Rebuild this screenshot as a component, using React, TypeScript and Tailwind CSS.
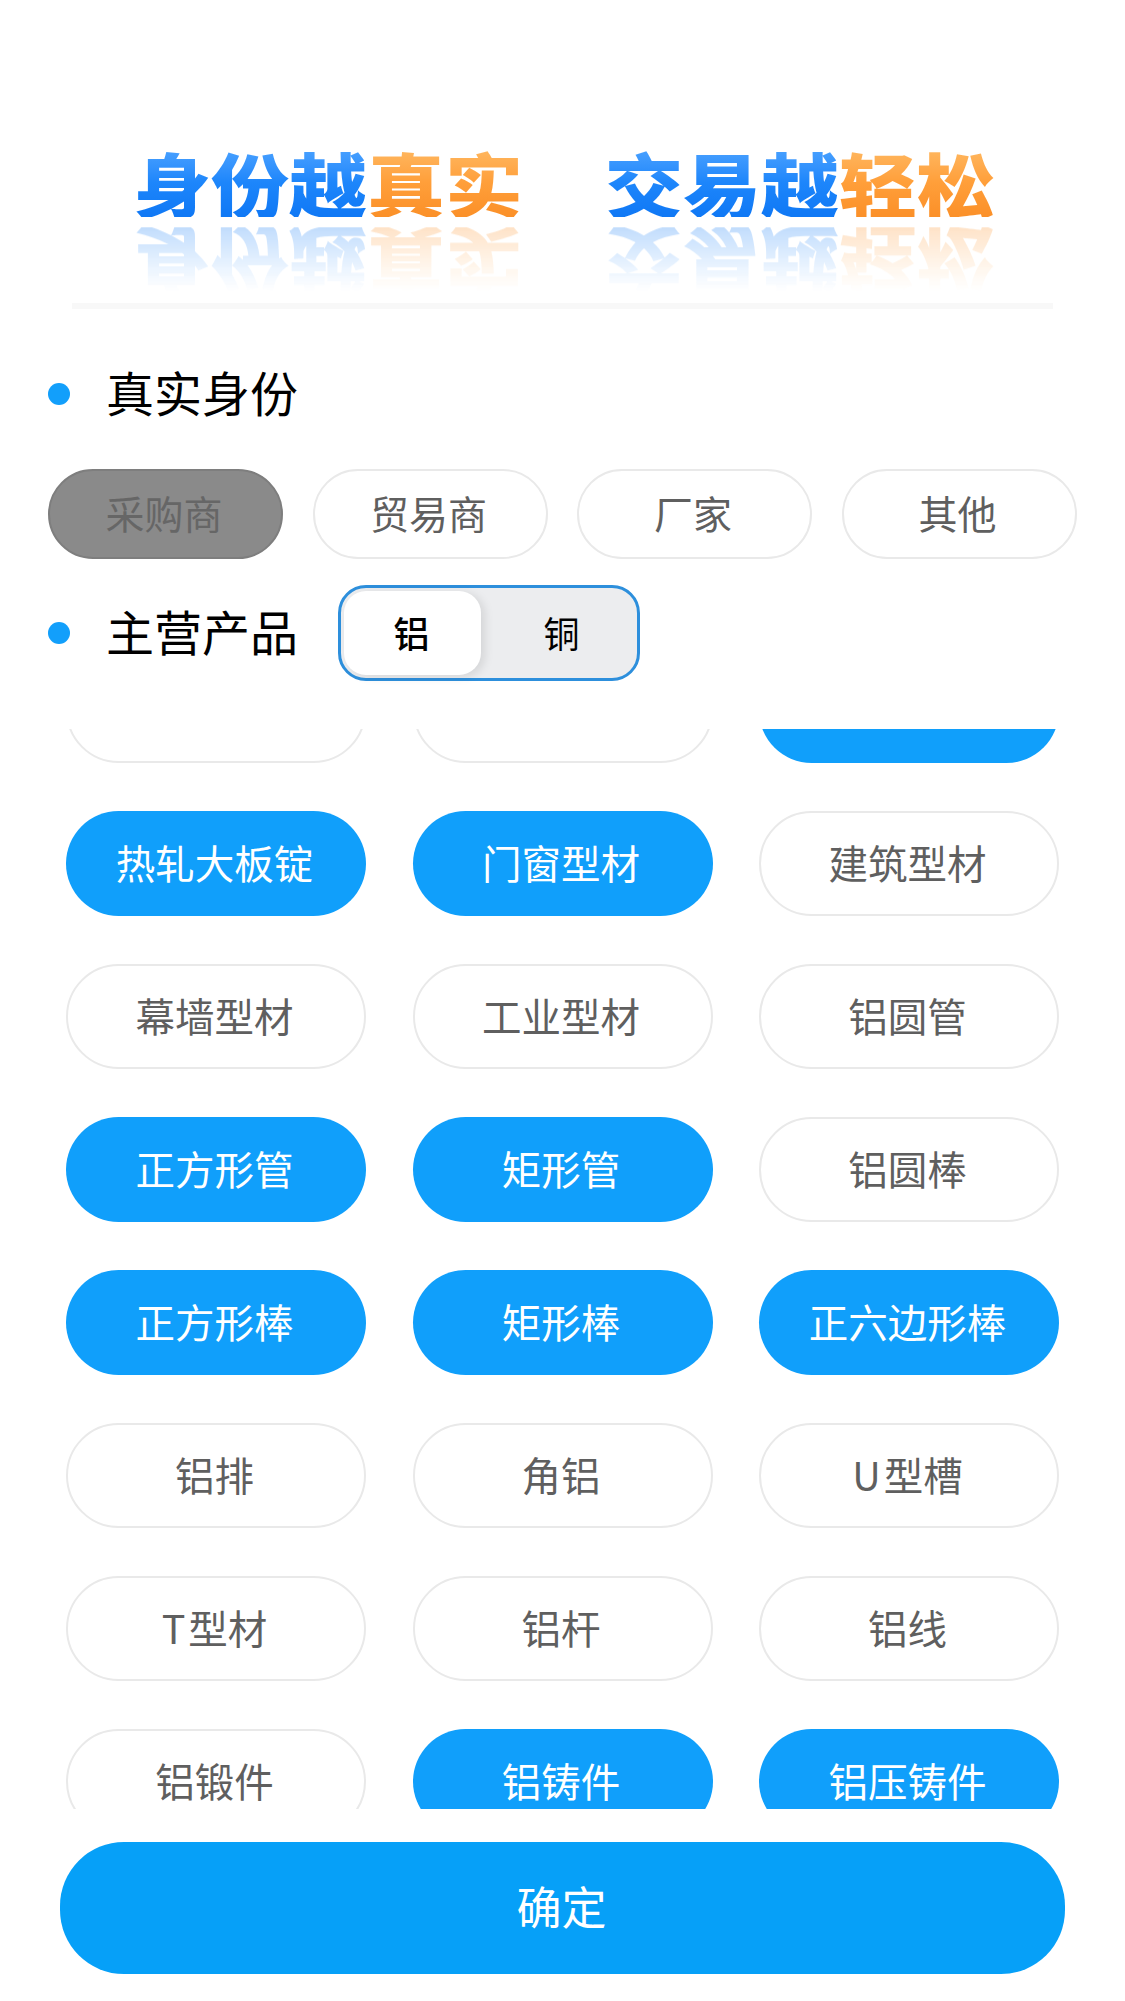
const roles = ['采购商', '贸易商', '厂家', '其他'];

// first row is scrolled almost out of view, its labels are hidden behind the clip
const products: { label: string; on?: boolean }[] = [
  { label: '' },
  { label: '' },
  { label: '', on: true },
  { label: '热轧大板锭', on: true },
  { label: '门窗型材', on: true },
  { label: '建筑型材' },
  { label: '幕墙型材' },
  { label: '工业型材' },
  { label: '铝圆管' },
  { label: '正方形管', on: true },
  { label: '矩形管', on: true },
  { label: '铝圆棒' },
  { label: '正方形棒', on: true },
  { label: '矩形棒', on: true },
  { label: '正六边形棒', on: true },
  { label: '铝排' },
  { label: '角铝' },
  { label: 'U 型槽' },
  { label: 'T 型材' },
  { label: '铝杆' },
  { label: '铝线' },
  { label: '铝锻件' },
  { label: '铝铸件', on: true },
  { label: '铝压铸件', on: true },
];

function BannerWord({ blue, orange }: { blue: string; orange: string }) {
  return (
    <div className="h-[78px] w-[390px] origin-top scale-y-90 text-[78px] leading-[78px] font-black whitespace-nowrap [-webkit-box-reflect:below_11px_linear-gradient(transparent_8%,rgba(255,255,255,0.26))]">
      <span className="inline-block bg-gradient-to-b from-[#4aa2ff] via-[#1d86fb] to-[#0f78f5] bg-clip-text text-transparent">{blue}</span>
      <span className="inline-block bg-gradient-to-b from-[#ffb860] via-[#ff9f3a] to-[#fb9028] bg-clip-text text-transparent">{orange}</span>
    </div>
  );
}

function SectionTitle({ children }: { children: string }) {
  return (
    <div className="flex items-center gap-[36px]">
      <span className="h-[22px] w-[22px] rounded-full bg-[#129ffb]" />
      <span className="-translate-y-[3px] text-[48px] leading-none text-black">{children}</span>
    </div>
  );
}

export default function App() {
  return (
    <div
      className="flex h-[2001px] w-[1125px] flex-col overflow-hidden bg-white"
      style={{ fontFamily: '"Noto Sans CJK SC", "Noto Sans", sans-serif' }}
    >
      <div className="flex h-[225px] gap-[82px] pt-[147px] pl-[133px]">
        <BannerWord blue="身份越" orange="真实" />
        <BannerWord blue="交易越" orange="轻松" />
      </div>
      <div className="mx-[72px] mt-[78px] h-[6px] bg-[#f8f8f8]" />

      <div className="mt-[61px] pl-[48px]">
        <SectionTitle>真实身份</SectionTitle>
      </div>

      <div className="mt-[51px] flex gap-[29.5px] pl-[48px]">
        {roles.map((role, i) => (
          <div
            key={role}
            className={
              i === 0
                ? 'flex h-[90px] w-[235px] items-center justify-center rounded-[45px] border-2 border-[#7e7e7e] bg-[#8a8a8a] pr-[3px] pb-[4px] text-[39px] text-[#666666]'
                : 'flex h-[90px] w-[235px] items-center justify-center rounded-[45px] border-2 border-[#e9e9e9] bg-white pr-[3px] pb-[4px] text-[39px] text-[#5f5f5f]'
            }
          >
            {role}
          </div>
        ))}
      </div>

      <div className="mt-[26px] flex items-center gap-[40px] pl-[48px]">
        <SectionTitle>主营产品</SectionTitle>
        <div className="flex h-[96px] w-[302px] items-center rounded-[28px] border-[3px] border-[#2d8fdc] bg-[#ecedef] p-[3px]">
          <div className="flex h-full w-[137px] items-center justify-center rounded-[22px] bg-white pr-[2px] pb-[3px] text-[36px] font-medium text-black shadow-[4px_2px_10px_rgba(0,0,0,0.1)]">
            铝
          </div>
          <div className="flex flex-1 items-center justify-center pb-[3px] pl-[8px] text-[36px] text-black">铜</div>
        </div>
      </div>

      <div className="mx-[66px] mt-[48px] h-[1080px] overflow-hidden">
        <div className="-mt-[71px] grid grid-cols-[300px_300px_300px] gap-x-[46.5px] gap-y-[48px]">
          {products.map((p, i) => (
            <div
              key={i}
              className={
                p.on
                  ? 'flex h-[105px] items-center justify-center rounded-[53px] bg-[#109ffb] pr-[3px] pb-[3px] text-[39.5px] [word-spacing:-6px] text-white'
                  : 'flex h-[105px] items-center justify-center rounded-[53px] border-[2.5px] border-[#e9e9e9] bg-white pr-[3px] pb-[3px] text-[39.5px] [word-spacing:-6px] text-[#5f5f5f]'
              }
            >
              {p.label}
            </div>
          ))}
        </div>
      </div>

      <div className="mx-[60px] mt-[33px] flex h-[132px] items-center justify-center rounded-[64px] bg-[#06a0f8] pr-[2px] pb-[4px] text-[45px] text-white">
        确定
      </div>
    </div>
  );
}
